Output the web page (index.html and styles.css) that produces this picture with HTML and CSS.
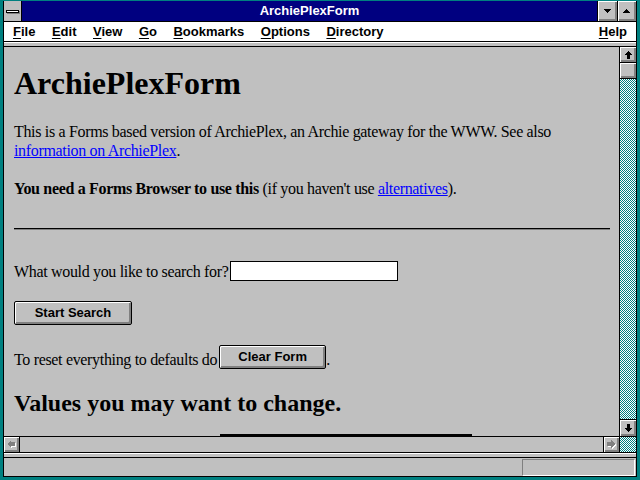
FILE: index.html
```html
<!DOCTYPE html>
<html lang="en">
<head>
<meta charset="UTF-8">
<title>ArchiePlexForm</title>
<link rel="stylesheet" href="styles.css">
</head>
<body>

<div class="window">
    <div class="titlebar">
        <div class="sysmenu"><span class="sysbar"></span></div>
        <div class="title">ArchiePlexForm</div>
        <div class="tbtn min">
            <svg width="7" height="4" viewBox="0 0 7 4" shape-rendering="crispEdges"><polygon points="0,0 7,0 3.5,4" fill="#000"/></svg>
        </div>
        <div class="tbtn max">
            <svg width="7" height="4" viewBox="0 0 7 4" shape-rendering="crispEdges"><polygon points="0,4 7,4 3.5,0" fill="#000"/></svg>
        </div>
    </div>

    <div class="menubar">
        <span class="menu-item"><u>F</u>ile</span>
        <span class="menu-item"><u>E</u>dit</span>
        <span class="menu-item"><u>V</u>iew</span>
        <span class="menu-item"><u>G</u>o</span>
        <span class="menu-item"><u>B</u>ookmarks</span>
        <span class="menu-item"><u>O</u>ptions</span>
        <span class="menu-item"><u>D</u>irectory</span>
        <span class="menu-item help"><u>H</u>elp</span>
    </div>
    <div class="toolstrip"></div>

    <div class="client">
        <div class="doc">
            <h1 class="page-title">ArchiePlexForm</h1>
            <p class="para">This is a Forms based version of ArchiePlex, an Archie gateway for the WWW. See also <a href="#">information on ArchiePlex</a>.</p>
            <p class="para"><b>You need a Forms Browser to use this</b> (if you haven't use <a href="#">alternatives</a>).</p>
            <div class="rule"></div>
            <div class="search-row">
                <span>What would you like to search for?</span>
                <input type="text" class="search-box">
            </div>
            <div class="btn-row">
                <button class="btn start">Start Search</button>
            </div>
            <div class="reset-row">
                <span>To reset everything to defaults do</span>
                <button class="btn clear">Clear Form</button><span>.</span>
            </div>
            <h2 class="sub-title">Values you may want to change.</h2>
            <div class="table-top"></div>
        </div>
        <div class="vscroll">
            <div class="sbtn up">
                <svg width="9" height="8" viewBox="0 0 9 8" shape-rendering="crispEdges"><polygon points="4.5,0 9,4 6,4 6,8 3,8 3,4 0,4" fill="#000"/></svg>
            </div>
            <div class="sbtn thumb"></div>
            <div class="track"></div>
            <div class="sbtn down">
                <svg width="9" height="8" viewBox="0 0 9 8" shape-rendering="crispEdges"><polygon points="3,0 6,0 6,4 9,4 4.5,8 0,4 3,4" fill="#000"/></svg>
            </div>
        </div>
    </div>

    <div class="hscroll">
        <div class="sbtn left">
            <svg width="9" height="9" viewBox="0 0 9 9" shape-rendering="crispEdges"><polygon points="1,5 5,1 5,3 9,3 9,7 5,7 5,9" fill="#fff"/><polygon points="0,4 4,0 4,2 8,2 8,6 4,6 4,8" fill="#808080"/></svg>
        </div>
        <div class="htrack"></div>
        <div class="sbtn right">
            <svg width="9" height="9" viewBox="0 0 9 9" shape-rendering="crispEdges"><polygon points="9,5 5,1 5,3 1,3 1,7 5,7 5,9" fill="#fff"/><polygon points="8,4 4,0 4,2 0,2 0,6 4,6 4,8" fill="#808080"/></svg>
        </div>
        <div class="corner"></div>
    </div>
    <div class="strip"></div>
    <div class="status">
        <div class="status-box"></div>
    </div>
</div>

</body>
</html>
```

FILE: styles.css
```css
body, html {
    margin: 0;
    width: 640px;
    height: 480px;
    overflow: hidden;
    background-color: #008080;
}
.window {
    box-sizing: border-box;
    width: 634px;
    margin: 1px 3px 0 3px;
    border-left: 1px solid #000;
    border-right: 1px solid #000;
    border-bottom: 1px solid #000;
    background: #c0c0c0;
    display: flex;
    flex-direction: column;
}

/* title bar */
.titlebar {
    display: flex;
    height: 20px;
    border-bottom: 1px solid #000;
}
.sysmenu {
    width: 17px;
    border-right: 1px solid #000;
    background: #c0c0c0;
    display: flex;
    align-items: center;
    justify-content: center;
}
.sysbar {
    width: 11px;
    height: 1px;
    background: #fff;
    border: 1px solid #000;
    box-shadow: 1px 1px #808080;
    margin-left: -1px;
}
.title {
    flex: 1;
    background: #000080;
    color: #fff;
    font: bold 13px "Liberation Sans", Arial, sans-serif;
    line-height: 20px;
    text-align: center;
}
.tbtn {
    border-left: 1px solid #000;
    background: #c0c0c0;
    box-shadow: inset 1px 1px #fff, inset -2px -2px #808080;
    display: flex;
    align-items: center;
    justify-content: center;
}
.tbtn.min { width: 19px; }
.tbtn.max { width: 18px; }
.tbtn svg { margin: -1px 0 0 -1px; }

/* menu */
.menubar {
    display: flex;
    height: 19px;
    background: #fff;
    border-bottom: 1px solid #000;
    padding: 0 9px;
    gap: 16.5px;
    font: bold 13px "Liberation Sans", Arial, sans-serif;
    line-height: 19px;
}
.menu-item u {
    text-decoration-thickness: 1px;
    text-underline-offset: 2px;
}
.menu-item.help {
    margin-left: auto;
}
.toolstrip {
    height: 3px;
    border-top: 1px solid #fff;
    border-bottom: 1px solid #000;
}

/* document area */
.client {
    display: flex;
    height: 389px;
}
.doc {
    flex: 1;
    overflow: hidden;
    padding: 0 9px 0 10px;
    font-family: "Liberation Serif", "Times New Roman", serif;
    font-size: 16px;
    line-height: 19px;
    letter-spacing: -0.33px;
    color: #000;
}
.page-title {
    margin: 18px 0 0;
    font-size: 32px;
    line-height: 37px;
    font-weight: bold;
    letter-spacing: 0;
}
.para {
    margin: 20px 0 0;
}
.para + .para {
    margin-top: 19px;
}
a {
    color: #0000ff;
    text-decoration: underline;
}
.rule {
    margin-top: 30px;
    height: 1px;
    background: #000;
    border-bottom: 1px solid #808080;
}
.search-row {
    margin-top: 31px;
    display: flex;
    align-items: center;
    gap: 2px;
    height: 20px;
}
.search-box {
    box-sizing: border-box;
    width: 168px;
    height: 20px;
    margin: 0;
    border: 1px solid #000;
    background: #fff;
    padding: 0;
}
.btn-row {
    margin-top: 20px;
}
.btn {
    box-sizing: border-box;
    height: 24px;
    margin: 0;
    padding: 0 0 1px;
    border: 1px solid #000;
    border-radius: 2px;
    background: #c0c0c0;
    box-shadow: inset 1px 1px #fff, inset -2px -2px #808080;
    font: bold 13px "Liberation Sans", Arial, sans-serif;
    letter-spacing: 0;
    color: #000;
    display: block;
}
.btn.start { width: 118px; }
.btn.clear { width: 107px; margin-left: 2px; }
.reset-row {
    margin-top: 20px;
    display: flex;
    align-items: flex-end;
    height: 24px;
}
.sub-title {
    margin: 20px 0 0;
    font-size: 24px;
    line-height: 28px;
    font-weight: bold;
    letter-spacing: 0;
}
.table-top {
    margin: 17px 0 0 206px;
    width: 252px;
    border-top: 2px solid #000;
}

/* scroll bars */
.vscroll {
    width: 16px;
    border-left: 1px solid #000;
    display: flex;
    flex-direction: column;
}
.sbtn {
    background: #c0c0c0;
    box-shadow: inset 1px 1px #fff, inset -2px -2px #808080;
    display: flex;
    align-items: center;
    justify-content: center;
}
.sbtn.up, .sbtn.thumb {
    height: 15px;
    border-bottom: 1px solid #000;
}
.sbtn.down {
    height: 16px;
    border-top: 1px solid #000;
}
.track, .corner {
    background-color: #fff;
    background-image: repeating-conic-gradient(#008080 0 25%, #fff 0 50%);
    background-size: 2px 2px;
}
.track {
    flex: 1;
}
.hscroll {
    display: flex;
    height: 15px;
    border-top: 1px solid #000;
    border-bottom: 1px solid #000;
}
.sbtn.left {
    width: 15px;
    border-right: 1px solid #000;
}
.sbtn.right {
    width: 15px;
    border-left: 1px solid #000;
}
.htrack {
    flex: 1;
}
.corner {
    width: 16px;
    border-left: 1px solid #000;
}
.strip {
    height: 3px;
    border-top: 1px solid #fff;
    border-bottom: 1px solid #000;
}
.status {
    height: 18px;
    display: flex;
    justify-content: flex-end;
    align-items: flex-start;
}
.status-box {
    box-sizing: border-box;
    width: 113px;
    height: 17px;
    margin: 1px 1px 0 0;
    border-top: 1px solid #808080;
    border-left: 1px solid #808080;
    border-bottom: 1px solid #fff;
    border-right: 1px solid #fff;
}
```
